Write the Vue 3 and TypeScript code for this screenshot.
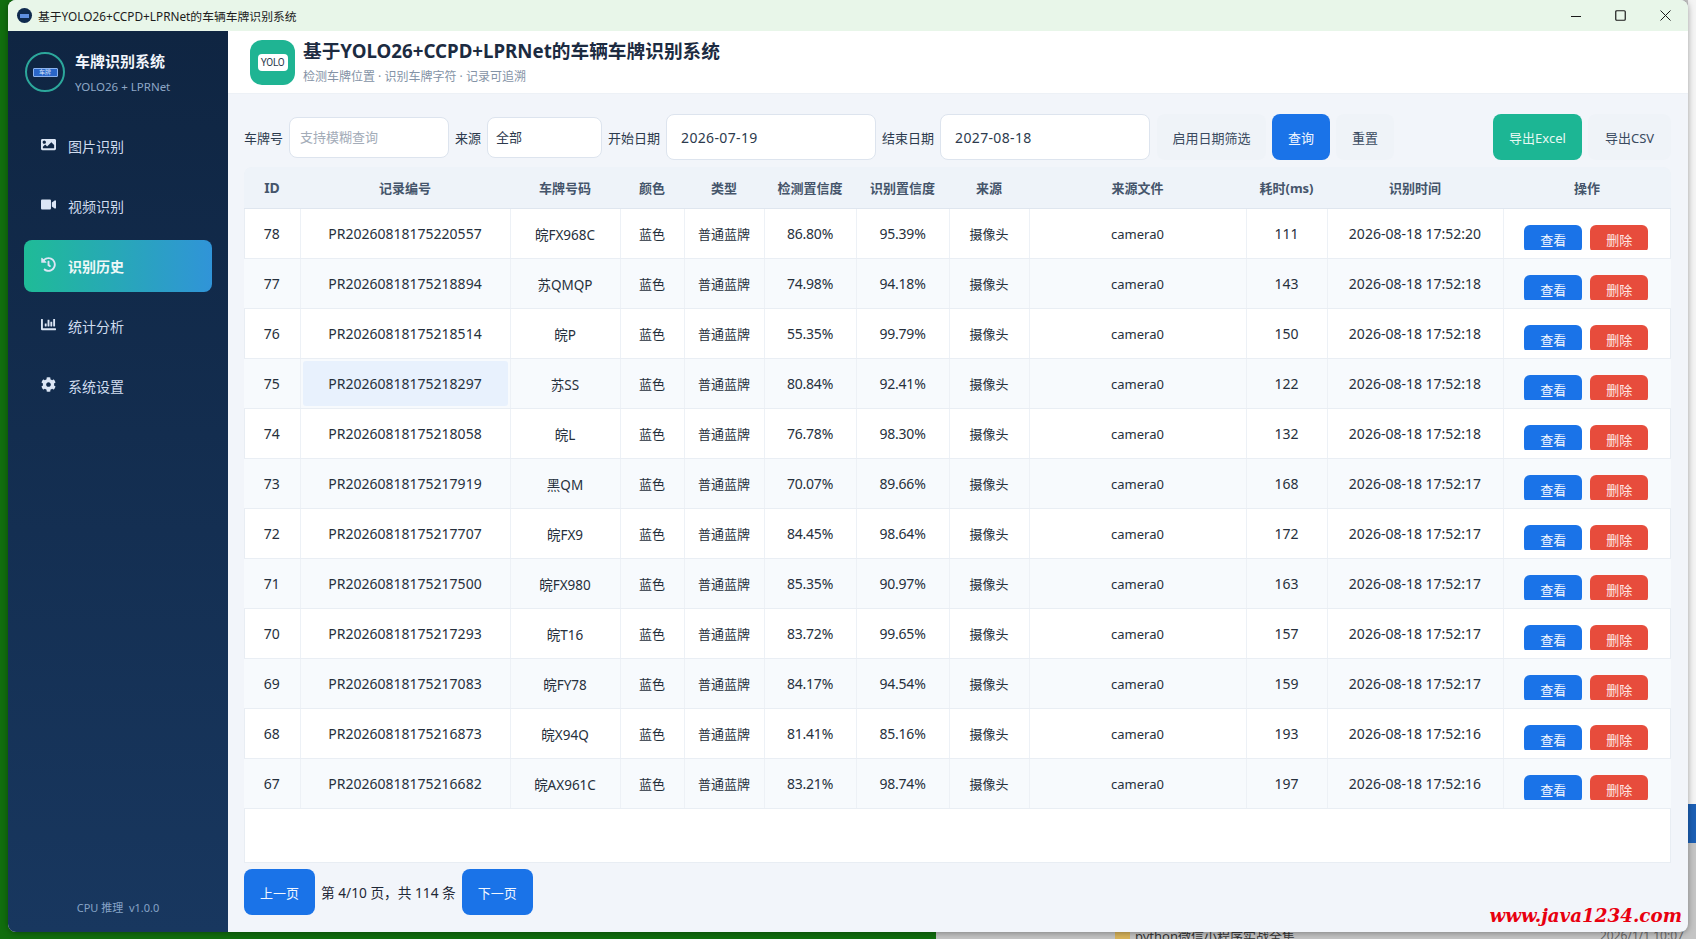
<script setup lang="ts">
interface Row {
  id: number
  no: string
  plate: string
  det: string
  rec: string
  ms: number
  time: string
}

const rows: Row[] = [
  { id: 78, no: 'PR20260818175220557', plate: '皖FX968C', det: '86.80%', rec: '95.39%', ms: 111, time: '2026-08-18 17:52:20' },
  { id: 77, no: 'PR20260818175218894', plate: '苏QMQP', det: '74.98%', rec: '94.18%', ms: 143, time: '2026-08-18 17:52:18' },
  { id: 76, no: 'PR20260818175218514', plate: '皖P', det: '55.35%', rec: '99.79%', ms: 150, time: '2026-08-18 17:52:18' },
  { id: 75, no: 'PR20260818175218297', plate: '苏SS', det: '80.84%', rec: '92.41%', ms: 122, time: '2026-08-18 17:52:18' },
  { id: 74, no: 'PR20260818175218058', plate: '皖L', det: '76.78%', rec: '98.30%', ms: 132, time: '2026-08-18 17:52:18' },
  { id: 73, no: 'PR20260818175217919', plate: '黑QM', det: '70.07%', rec: '89.66%', ms: 168, time: '2026-08-18 17:52:17' },
  { id: 72, no: 'PR20260818175217707', plate: '皖FX9', det: '84.45%', rec: '98.64%', ms: 172, time: '2026-08-18 17:52:17' },
  { id: 71, no: 'PR20260818175217500', plate: '皖FX980', det: '85.35%', rec: '90.97%', ms: 163, time: '2026-08-18 17:52:17' },
  { id: 70, no: 'PR20260818175217293', plate: '皖T16', det: '83.72%', rec: '99.65%', ms: 157, time: '2026-08-18 17:52:17' },
  { id: 69, no: 'PR20260818175217083', plate: '皖FY78', det: '84.17%', rec: '94.54%', ms: 159, time: '2026-08-18 17:52:17' },
  { id: 68, no: 'PR20260818175216873', plate: '皖X94Q', det: '81.41%', rec: '85.16%', ms: 193, time: '2026-08-18 17:52:16' },
  { id: 67, no: 'PR20260818175216682', plate: '皖AX961C', det: '83.21%', rec: '98.74%', ms: 197, time: '2026-08-18 17:52:16' }
]

const columns = [
  { label: 'ID', width: 56 },
  { label: '记录编号', width: 210 },
  { label: '车牌号码', width: 110 },
  { label: '颜色', width: 64 },
  { label: '类型', width: 80 },
  { label: '检测置信度', width: 92 },
  { label: '识别置信度', width: 93 },
  { label: '来源', width: 80 },
  { label: '来源文件', width: 217 },
  { label: '耗时(ms)', width: 81 },
  { label: '识别时间', width: 176 },
  { label: '操作', width: 168 }
]

const nav = [
  {
    label: '图片识别',
    box: '0 0 512 512',
    d: 'M464 448H48c-26.51 0-48-21.49-48-48V112c0-26.51 21.49-48 48-48h416c26.51 0 48 21.49 48 48v288c0 26.51-21.49 48-48 48zM112 120c-30.928 0-56 25.072-56 56s25.072 56 56 56 56-25.072 56-56-25.072-56-56-56zM64 384h384V272l-87.515-87.515c-4.686-4.686-12.284-4.686-16.971 0L208 320l-55.515-55.515c-4.686-4.686-12.284-4.686-16.971 0L64 336v48z'
  },
  {
    label: '视频识别',
    box: '0 0 576 512',
    d: 'M336.2 64H47.8C21.4 64 0 85.4 0 111.8v288.4C0 426.6 21.4 448 47.8 448h288.4c26.4 0 47.8-21.4 47.8-47.8V111.8c0-26.4-21.4-47.8-47.8-47.8zm189.4 37.7L416 177.3v157.4l109.6 75.5c21.2 14.6 50.4-.3 50.4-25.8V127.5c0-25.4-29.1-40.4-50.4-25.8z'
  },
  {
    label: '识别历史',
    active: true,
    box: '0 0 512 512',
    d: 'M504 255.531c.253 136.64-111.18 248.372-247.82 248.468-59.015.042-113.223-20.53-155.822-54.911-11.077-8.94-11.905-25.541-1.839-35.607l11.267-11.267c8.609-8.609 22.353-9.551 31.891-1.984C173.062 425.135 212.781 440 256 440c101.705 0 184-82.311 184-184 0-101.705-82.311-184-184-184-48.814 0-93.149 18.969-126.068 49.932l50.754 50.754c10.08 10.08 2.941 27.314-11.313 27.314H24c-8.837 0-16-7.163-16-16V38.627c0-14.254 17.234-21.393 27.314-11.314l49.372 49.372C129.209 34.136 189.552 8 256 8c136.81 0 247.747 110.78 248 247.531zm-180.912 78.784l9.823-12.63c8.138-10.463 6.253-25.542-4.21-33.679L288 256.349V152c0-13.255-10.745-24-24-24h-16c-13.255 0-24 10.745-24 24v135.651l65.409 50.874c10.463 8.137 25.541 6.253 33.679-4.21z'
  },
  {
    label: '统计分析',
    box: '0 0 512 512',
    d: 'M332.8 320h38.4c6.4 0 12.8-6.4 12.8-12.8V172.8c0-6.4-6.4-12.8-12.8-12.8h-38.4c-6.4 0-12.8 6.4-12.8 12.8v134.4c0 6.4 6.4 12.8 12.8 12.8zm96 0h38.4c6.4 0 12.8-6.4 12.8-12.8V76.8c0-6.4-6.4-12.8-12.8-12.8h-38.4c-6.4 0-12.8 6.4-12.8 12.8v230.4c0 6.4 6.4 12.8 12.8 12.8zm-288 0h38.4c6.4 0 12.8-6.4 12.8-12.8v-70.4c0-6.4-6.4-12.8-12.8-12.8h-38.4c-6.4 0-12.8 6.4-12.8 12.8v70.4c0 6.4 6.4 12.8 12.8 12.8zm96 0h38.4c6.4 0 12.8-6.4 12.8-12.8V108.8c0-6.4-6.4-12.8-12.8-12.8h-38.4c-6.4 0-12.8 6.4-12.8 12.8v198.4c0 6.4 6.4 12.8 12.8 12.8zM496 384H64V80c0-8.84-7.16-16-16-16H16C7.16 64 0 71.16 0 80v336c0 17.67 14.33 32 32 32h464c8.84 0 16-7.16 16-16v-32c0-8.84-7.16-16-16-16z'
  },
  {
    label: '系统设置',
    box: '0 0 512 512',
    d: 'M487.4 315.7l-42.6-24.6c4.3-23.2 4.3-47 0-70.2l42.6-24.6c4.9-2.8 7.1-8.6 5.5-14-11.1-35.6-30-67.8-54.7-94.6-3.8-4.1-10-5.1-14.8-2.3L380.8 110c-17.9-15.4-38.5-27.3-60.8-35.1V25.8c0-5.6-3.9-10.5-9.4-11.7-36.7-8.2-74.3-7.8-109.2 0-5.5 1.2-9.4 6.1-9.4 11.7V75c-22.2 7.9-42.8 19.8-60.8 35.1L88.7 85.5c-4.9-2.8-11-1.9-14.8 2.3-24.7 26.7-43.6 58.9-54.7 94.6-1.7 5.4.6 11.2 5.5 14L67.3 221c-4.3 23.2-4.3 47 0 70.2l-42.6 24.6c-4.9 2.8-7.1 8.6-5.5 14 11.1 35.6 30 67.8 54.7 94.6 3.8 4.1 10 5.1 14.8 2.3l42.6-24.6c17.9 15.4 38.5 27.3 60.8 35.1v49.2c0 5.6 3.9 10.5 9.4 11.7 36.7 8.2 74.3 7.8 109.2 0 5.5-1.2 9.4-6.1 9.4-11.7v-49.2c22.2-7.9 42.8-19.8 60.8-35.1l42.6 24.6c4.9 2.8 11 1.9 14.8-2.3 24.7-26.7 43.6-58.9 54.7-94.6 1.5-5.5-.7-11.3-5.6-14.1zM256 336c-44.1 0-80-35.9-80-80s35.9-80 80-80 80 35.9 80 80-35.9 80-80 80z'
  }
]
</script>

<template>
  <div class="desktop">
    <!-- 窗口後面的桌面內容 -->
    <div class="behind-strip"></div>
    <div class="behind-blue"></div>
    <div class="behind-file">python微信小程序实战全集</div>
    <div class="behind-date">2026/1/1 10:07</div>

    <div class="window">
      <div class="titlebar">
        <span class="title-icon"><i></i></span>
        <span class="title-text">基于YOLO26+CCPD+LPRNet的车辆车牌识别系统</span>
        <div class="win-btns">
          <span class="win-btn">
            <svg width="10" height="10" viewBox="0 0 10 10"><path d="M0 5.5h10" stroke="#1a1a1a" stroke-width="1" /></svg>
          </span>
          <span class="win-btn">
            <svg width="11" height="11" viewBox="0 0 11 11"><rect x="0.75" y="0.75" width="9.5" height="9.5" rx="1" fill="none" stroke="#1a1a1a" stroke-width="1.2" /></svg>
          </span>
          <span class="win-btn">
            <svg width="11" height="11" viewBox="0 0 11 11"><path d="M0.5 0.5l10 10M10.5 0.5l-10 10" stroke="#1a1a1a" stroke-width="1" /></svg>
          </span>
        </div>
      </div>

      <div class="body">
        <aside class="sidebar">
          <div class="brand">
            <div class="brand-logo"><span class="plate">车牌</span></div>
            <div class="brand-text">
              <div class="brand-name">车牌识别系统</div>
              <div class="brand-sub">YOLO26 + LPRNet</div>
            </div>
          </div>
          <nav class="nav">
            <div v-for="item in nav" :key="item.label" class="nav-item" :class="{ active: item.active }">
              <svg class="nav-icon" :viewBox="item.box" fill="currentColor"><path :d="item.d" /></svg>
              <span>{{ item.label }}</span>
            </div>
          </nav>
          <div class="side-foot">CPU 推理&nbsp;&nbsp;v1.0.0</div>
        </aside>

        <main class="main">
          <header class="header">
            <div class="head-logo"><span>YOLO</span></div>
            <div>
              <div class="head-title">基于YOLO26+CCPD+LPRNet的车辆车牌识别系统</div>
              <div class="head-sub">检测车牌位置 · 识别车牌字符 · 记录可追溯</div>
            </div>
          </header>

          <section class="content">
            <div class="filters">
              <label>车牌号</label>
              <input class="field w-plate" placeholder="支持模糊查询" />
              <label>来源</label>
              <select class="field w-source"><option>全部</option></select>
              <label>开始日期</label>
              <input class="field date" value="2026-07-19" />
              <label>结束日期</label>
              <input class="field date" value="2027-08-18" />
              <button class="btn gray w-toggle">启用日期筛选</button>
              <button class="btn blue w-query">查询</button>
              <button class="btn gray w-query">重置</button>
              <span class="spacer"></span>
              <button class="btn teal w-excel">导出Excel</button>
              <button class="btn gray w-csv">导出CSV</button>
            </div>

            <div class="table-wrap">
              <table>
                <colgroup>
                  <col v-for="c in columns" :key="c.label" :style="{ width: c.width + 'px' }" />
                </colgroup>
                <thead>
                  <tr>
                    <th v-for="c in columns" :key="c.label">{{ c.label }}</th>
                  </tr>
                </thead>
                <tbody>
                  <tr v-for="r in rows" :key="r.id">
                    <td>{{ r.id }}</td>
                    <td :class="{ selected: r.id === 75 }"><span>{{ r.no }}</span></td>
                    <td class="plate-no">{{ r.plate }}</td>
                    <td class="cjk">蓝色</td>
                    <td class="cjk">普通蓝牌</td>
                    <td class="pct">{{ r.det }}</td>
                    <td class="pct">{{ r.rec }}</td>
                    <td class="cjk">摄像头</td>
                    <td class="cjk">camera0</td>
                    <td>{{ r.ms }}</td>
                    <td>{{ r.time }}</td>
                    <td class="ops-cell">
                      <div class="ops">
                        <button class="op blue">查看</button>
                        <button class="op red">删除</button>
                      </div>
                    </td>
                  </tr>
                </tbody>
              </table>
            </div>

            <div class="pager">
              <button class="btn blue w-page">上一页</button>
              <span class="page-text">第 4/10 页，共 114 条</span>
              <button class="btn blue w-page">下一页</button>
            </div>
          </section>
        </main>
      </div>
    </div>

    <div class="watermark">www.java1234.com</div>
  </div>
</template>

<style>
html,
body {
  margin: 0;
  padding: 0;
}
</style>

<style scoped>
.desktop {
  position: relative;
  width: 1696px;
  height: 939px;
  overflow: hidden;
  padding: 0 8px 7px;
  box-sizing: border-box;
  background: linear-gradient(to right, #116e0e 936px, #c4c4c4 936px);
  font-family: "Noto Sans", "Noto Sans CJK SC", sans-serif;
}

.behind-strip {
  position: absolute;
  top: 0;
  right: 0;
  width: 8px;
  height: 804px;
  background: #f4f4f4;
}

.behind-blue {
  position: absolute;
  top: 804px;
  right: 0;
  width: 8px;
  height: 39px;
  background: #1c5fb4;
}

.behind-file {
  position: absolute;
  left: 1135px;
  top: 929px;
  font-size: 13px;
  line-height: 14px;
  color: #333;
}

.behind-file::before {
  content: "";
  position: absolute;
  left: -20px;
  top: 3px;
  width: 15px;
  height: 7px;
  background: #d9b45b;
}

.behind-date {
  position: absolute;
  left: 1600px;
  top: 929px;
  font-size: 12px;
  line-height: 14px;
  color: #666;
}

.window {
  position: relative;
  height: 932px;
  display: flex;
  flex-direction: column;
  border-radius: 8px;
  overflow: hidden;
  background: #f2f5fa;
  box-shadow: 0 1px 6px rgba(0, 0, 0, 0.35);
}

.titlebar {
  height: 31px;
  flex: none;
  display: flex;
  align-items: center;
  padding-left: 9px;
  background: #e8f6e9;
}

.title-icon {
  width: 15px;
  height: 15px;
  border-radius: 50%;
  background: #0f2a4e;
  display: flex;
  align-items: center;
  justify-content: center;
}

.title-icon i {
  width: 9px;
  height: 4px;
  background: #5f8fe0;
}

.title-text {
  margin-left: 6px;
  font-size: 11.8px;
  color: #1c1c1c;
  white-space: nowrap;
}

.win-btns {
  margin-left: auto;
  display: flex;
}

.win-btn {
  width: 45px;
  height: 31px;
  display: flex;
  align-items: center;
  justify-content: center;
}

.body {
  flex: 1;
  min-height: 0;
  display: flex;
}

.sidebar {
  width: 220px;
  flex: none;
  display: flex;
  flex-direction: column;
  background: linear-gradient(to bottom, #0f2542, #18375f);
  color: #dfe8f5;
}

.brand {
  height: 89px;
  flex: none;
  display: flex;
  align-items: center;
  gap: 10px;
  padding: 0 0 7px 17px;
  box-sizing: border-box;
}

.brand-logo {
  width: 40px;
  height: 40px;
  box-sizing: border-box;
  border: 2px solid #2ca79b;
  border-radius: 50%;
  display: flex;
  align-items: center;
  justify-content: center;
}

.plate {
  width: 25px;
  height: 9px;
  box-sizing: border-box;
  border: 1px solid #8db4f0;
  border-radius: 1px;
  background: #2a66c9;
  color: #dce8fb;
  font-size: 6px;
  line-height: 7px;
  text-align: center;
  overflow: hidden;
}

.brand-text {
  padding-top: 1px;
}

.brand-name {
  font-size: 15px;
  line-height: 20px;
  font-weight: 700;
  color: #f2f6fc;
}

.brand-sub {
  margin-top: 8px;
  font-size: 11.5px;
  line-height: 16px;
  color: #8ea7c6;
}

.nav {
  display: flex;
  flex-direction: column;
  gap: 8px;
  padding: 0 16px;
}

.nav-item {
  height: 52px;
  display: flex;
  align-items: center;
  gap: 12px;
  padding-left: 17px;
  border-radius: 8px;
  font-size: 14px;
  color: #cfdcee;
}

.nav-item.active {
  background: linear-gradient(to right, #1fbb97, #3094d8);
  color: #eef8f7;
  font-weight: 700;
}

.nav-icon {
  width: 15px;
  height: 15px;
  margin-top: -3px;
  flex: none;
  color: #dce6f5;
}

.side-foot {
  margin-top: auto;
  padding-bottom: 16px;
  text-align: center;
  font-size: 11px;
  line-height: 16px;
  color: #86a3c6;
}

.main {
  flex: 1;
  min-width: 0;
  display: flex;
  flex-direction: column;
}

.header {
  height: 63px;
  flex: none;
  box-sizing: border-box;
  display: flex;
  align-items: center;
  gap: 8px;
  padding-left: 21px;
  background: #fff;
  border-bottom: 1px solid #edf1f6;
}

.head-logo {
  width: 45px;
  height: 45px;
  margin-top: 1px;
  margin-left: 1px;
  border-radius: 12px;
  background: #1fb493;
  display: flex;
  align-items: center;
  justify-content: center;
}

.head-logo span {
  width: 30px;
  height: 17px;
  border-radius: 4px;
  background: #fff;
  color: #2b3a4d;
  font-size: 10px;
  line-height: 17px;
  text-align: center;
  letter-spacing: -0.3px;
  font-family: "Roboto", sans-serif;
}

.head-title {
  font-size: 18.7px;
  line-height: 24px;
  font-weight: 700;
  color: #1c2b41;
  white-space: nowrap;
}

.head-sub {
  margin-top: 6px;
  font-size: 12px;
  line-height: 16px;
  color: #8493a6;
}

.content {
  flex: 1;
  min-height: 0;
  display: flex;
  flex-direction: column;
  padding: 20px 17px 17px 16px;
}

.filters {
  height: 46px;
  flex: none;
  display: flex;
  align-items: center;
  gap: 6px;
}

.filters label {
  font-size: 13px;
  color: #2c3a4d;
  white-space: nowrap;
}

.field {
  box-sizing: border-box;
  height: 41px;
  padding: 0 8px;
  border: 1px solid #dde4ee;
  border-radius: 8px;
  background: #fff;
  color: #2c3a4d;
  font-family: inherit;
  font-size: 13px;
  outline: none;
  appearance: none;
}

.field::placeholder {
  color: #a3acb8;
}

.w-plate {
  width: 160px;
  padding-left: 10px;
}

.w-source {
  width: 115px;
}

.date {
  width: 210px;
  height: 46px;
  padding: 0 14px;
  font-size: 14px;
  letter-spacing: 0.35px;
}

.btn {
  height: 46px;
  border: none;
  border-radius: 8px;
  padding: 0;
  font-family: inherit;
  font-size: 13px;
  flex: none;
}

.gray {
  background: #eff3f8;
  color: #3a4a60;
}

.blue {
  background: #1a73e8;
  color: #f2f7ff;
}

.teal {
  background: #1cb694;
  color: #e6f8f3;
}

.red {
  background: #e74c3c;
  color: #fde9e6;
}

.w-toggle {
  width: 109px;
  margin-left: 1px;
}

.w-query {
  width: 58px;
}

.w-excel {
  width: 89px;
}

.w-csv {
  width: 83px;
}

.w-page {
  width: 71px;
}

.spacer {
  flex: 1;
}

.table-wrap {
  flex: 1;
  min-height: 0;
  margin-top: 7px;
  background: #fff;
  border-radius: 8px 8px 0 0;
  box-shadow: 0 0 0 1px #e8edf3 inset;
  overflow: hidden;
}

table {
  width: 1427px;
  table-layout: fixed;
  border-collapse: collapse;
  color: #26303c;
  font-size: 14px;
}

th {
  height: 41px;
  padding: 0;
  background: #eef3f9;
  border-bottom: 1px solid #dfe6ef;
  color: #45556b;
  font-size: 13px;
  font-weight: 700;
}

th:first-child {
  font-size: 14px;
}

td {
  height: 50px;
  padding: 0;
  box-sizing: border-box;
  text-align: center;
  border-right: 1px solid #edf1f6;
  border-bottom: 1px solid #e9eef4;
}

td:last-child {
  border-right: none;
}

tbody tr:nth-child(even) td {
  background: #f7fafd;
}

.cjk {
  font-size: 13px;
}

.plate-no {
  font-size: 13.5px;
}

.pct {
  letter-spacing: -0.2px;
}

tbody tr td.selected {
  padding: 2px;
  background: #f7fafd;
}

td.selected span {
  display: flex;
  align-items: center;
  justify-content: center;
  height: 45px;
  border-radius: 3px;
  background: #e8f1fd;
}

.ops-cell {
  vertical-align: top;
  padding: 16px 2px 0 0;
}

.ops {
  height: 25px;
  overflow: hidden;
  display: flex;
  justify-content: center;
  gap: 8px;
  border-radius: 0 0 2px 2px;
}

.op {
  width: 58px;
  height: 28px;
  padding: 0;
  border: none;
  border-radius: 6px;
  font-family: inherit;
  font-size: 13px;
  flex: none;
}

.pager {
  flex: none;
  height: 46px;
  margin-top: 6px;
  display: flex;
  align-items: center;
  gap: 6px;
}

.page-text {
  font-size: 13.7px;
  color: #1e2836;
}

.watermark {
  position: absolute;
  right: 14px;
  top: 904px;
  font-family: "DejaVu Serif", serif;
  font-weight: 700;
  font-style: italic;
  font-size: 18.3px;
  line-height: 24px;
  color: #e8000f;
  white-space: nowrap;
}
</style>
